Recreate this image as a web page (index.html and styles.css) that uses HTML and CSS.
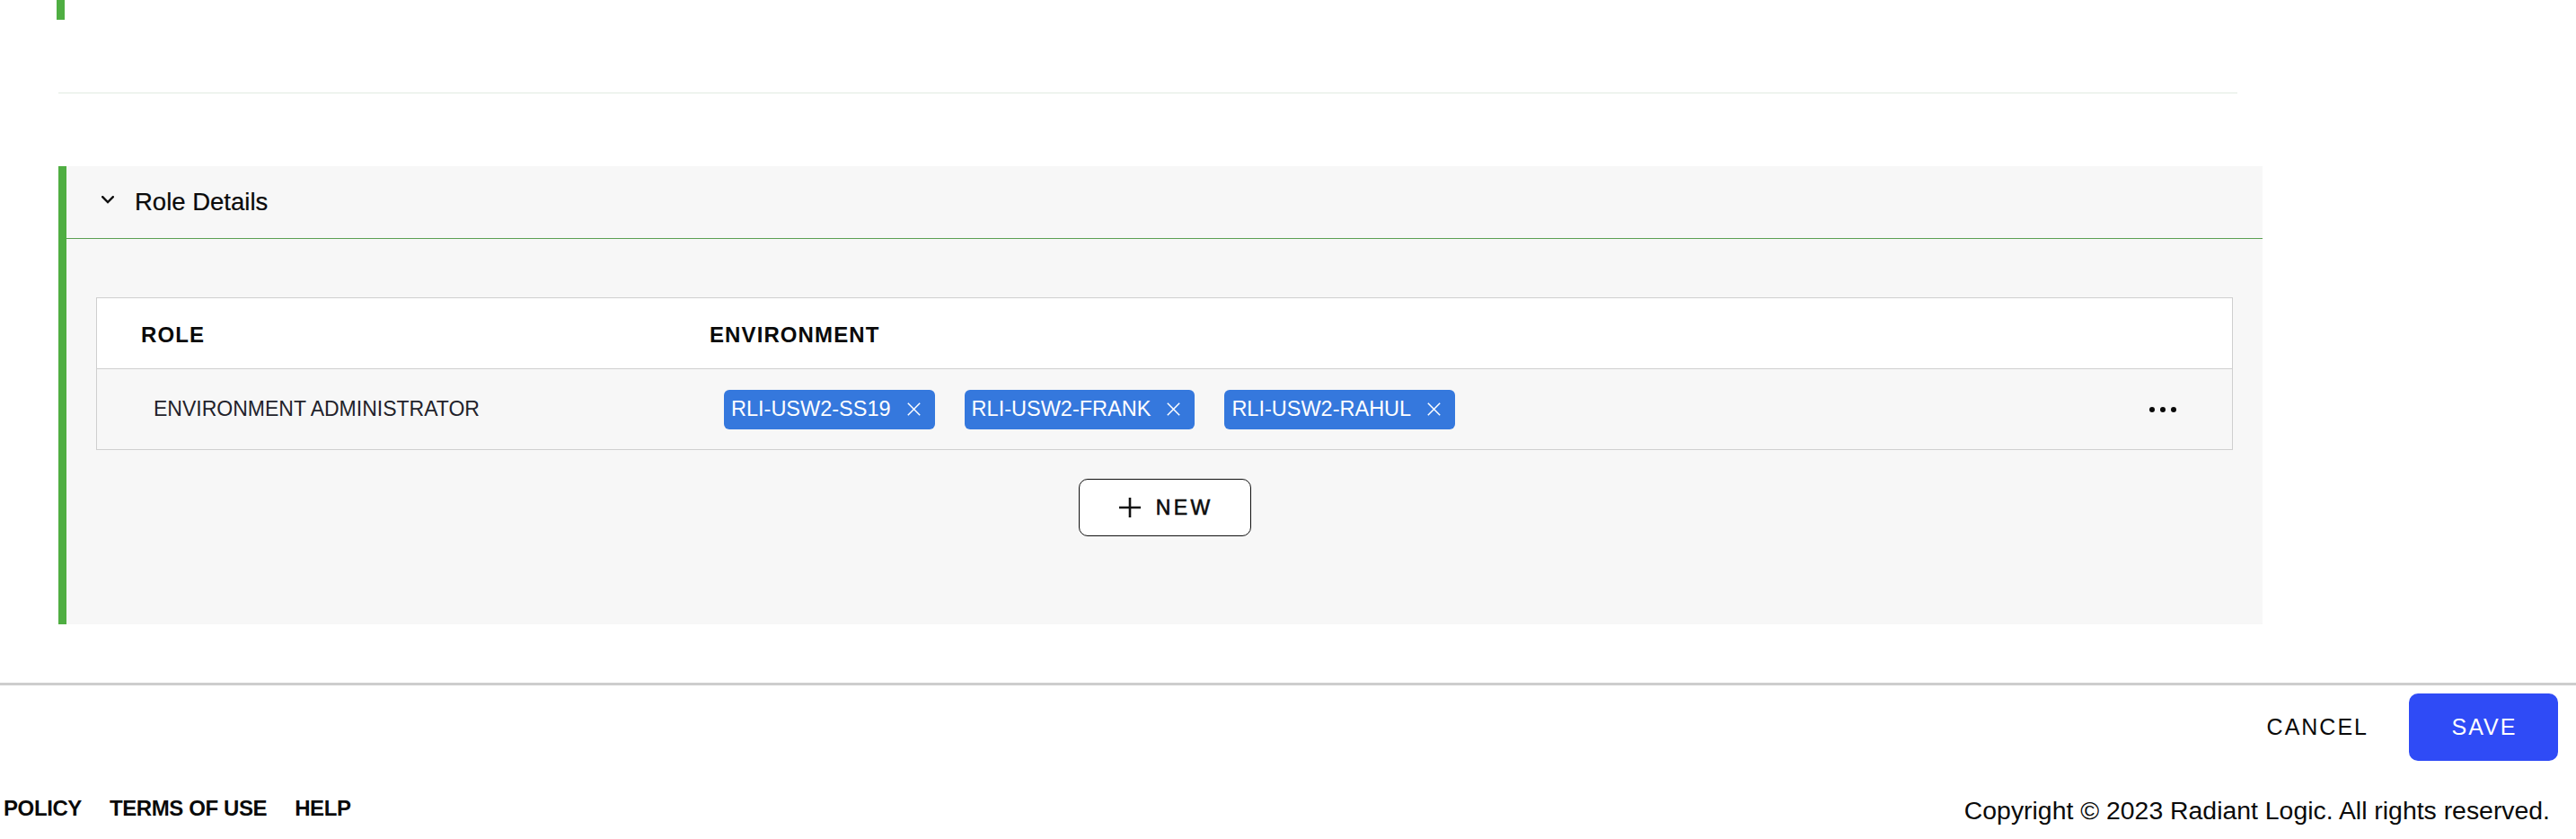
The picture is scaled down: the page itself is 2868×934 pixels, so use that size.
FILE: index.html
```html
<!DOCTYPE html>
<html lang="en">
<head>
<meta charset="utf-8">
<title>Role Details</title>
<link rel="stylesheet" href="styles.css">
</head>
<body>
<div class="page">
  <div class="prev-card"></div>
  <div class="divider"></div>

  <section class="role-section">
    <div class="section-header">
      <svg class="chevron" width="14" height="9" viewBox="0 0 14 9"><polyline points="1.2,1.2 7,7 12.8,1.2" fill="none" stroke="#111" stroke-width="2.4" stroke-linecap="square"/></svg>
      <span class="section-title">Role Details</span>
    </div>
    <div class="section-body">
      <div class="roles-table">
        <div class="row head-row">
          <div class="cell head-cell">ROLE</div>
          <div class="cell head-cell">ENVIRONMENT</div>
          <div class="cell head-cell"></div>
        </div>
        <div class="row body-row">
          <div class="cell role-cell">ENVIRONMENT ADMINISTRATOR</div>
          <div class="cell env-cell">
            <span class="chip">RLI-USW2-SS19<svg class="chip-x" width="15" height="15" viewBox="0 0 15 15"><path d="M0.8 0.8 L14.2 14.2 M14.2 0.8 L0.8 14.2" stroke="#fff" stroke-width="1.5" fill="none"/></svg></span>
            <span class="chip">RLI-USW2-FRANK<svg class="chip-x" width="15" height="15" viewBox="0 0 15 15"><path d="M0.8 0.8 L14.2 14.2 M14.2 0.8 L0.8 14.2" stroke="#fff" stroke-width="1.5" fill="none"/></svg></span>
            <span class="chip">RLI-USW2-RAHUL<svg class="chip-x" width="15" height="15" viewBox="0 0 15 15"><path d="M0.8 0.8 L14.2 14.2 M14.2 0.8 L0.8 14.2" stroke="#fff" stroke-width="1.5" fill="none"/></svg></span>
          </div>
          <div class="cell menu-cell">
            <span class="dots"><i></i><i></i><i></i></span>
          </div>
        </div>
      </div>
      <div class="new-wrap">
        <button class="new-btn" type="button">
          <svg class="plus" width="24" height="22" viewBox="0 0 24 22"><path d="M0 11 H24 M12 0 V22" stroke="#111" stroke-width="2.6" fill="none"/></svg>
          <span class="new-label">NEW</span>
        </button>
      </div>
    </div>
  </section>

  <div class="footer-rule"></div>

  <div class="actions">
    <button class="cancel-btn" type="button">CANCEL</button>
    <button class="save-btn" type="button">SAVE</button>
  </div>

  <footer class="footer">
    <nav class="footer-links">
      <a class="footer-link">POLICY</a>
      <a class="footer-link">TERMS OF USE</a>
      <a class="footer-link">HELP</a>
    </nav>
    <div class="copyright">Copyright © 2023 Radiant Logic. All rights reserved.</div>
  </footer>
</div>
</body>
</html>
```

FILE: styles.css
```css
* { box-sizing: border-box; }

html, body {
  margin: 0;
  padding: 0;
  background: #ffffff;
}

body {
  font-family: "Liberation Sans", Arial, sans-serif;
  color: #111111;
}

.page {
  width: 2868px;
  height: 934px;
  overflow: hidden;
}

.prev-card {
  margin-left: 63px;
  width: 9px;
  height: 22px;
  background: #4fae42;
}

.divider {
  margin: 81px 0 0 65px;
  width: 2426px;
  height: 1px;
  background: #e1ebe1;
}

.role-section {
  margin: 81px 0 0 65px;
  width: 2454px;
  background: #f7f7f7;
  border-left: 9px solid #4fae42;
}

.section-header {
  height: 81px;
  display: flex;
  align-items: center;
  padding-left: 39px;
  border-bottom: 1px solid #5b9f52;
}

.chevron {
  display: block;
  margin-top: -6px;
  margin-right: 23px;
}

.section-title {
  font-size: 27.5px;
  color: #0a0a0a;
  -webkit-text-stroke: 0.2px #0a0a0a;
}

.section-body {
  padding: 65px 33px 98px;
}

.roles-table {
  border: 1px solid #cfcfcf;
}

.row {
  display: grid;
  grid-template-columns: 633px 1fr auto;
  align-items: center;
}

.head-row {
  height: 79px;
  background: #ffffff;
  border-bottom: 1px solid #cfcfcf;
}

.head-cell {
  padding-left: 49px;
  padding-top: 4px;
  font-size: 24px;
  font-weight: 700;
  letter-spacing: 1.1px;
  color: #0a0a0a;
}

.body-row {
  height: 89px;
  background: #f7f7f7;
}

.role-cell {
  padding-left: 63px;
  font-size: 23px;
  color: #22222a;
}

.env-cell {
  padding-left: 65px;
  display: flex;
  gap: 33px;
}

.chip {
  display: inline-flex;
  align-items: center;
  height: 44px;
  padding: 0 16px 0 8px;
  gap: 18px;
  background: #3578dd;
  border-radius: 6px;
  color: #ffffff;
  font-size: 23.5px;
}

.chip-x {
  display: block;
}

.menu-cell {
  padding-right: 62px;
}

.dots {
  display: flex;
  gap: 6px;
}

.dots i {
  display: block;
  width: 6px;
  height: 6px;
  border-radius: 50%;
  background: #0a0a0a;
}

.new-wrap {
  display: flex;
  justify-content: center;
  margin-top: 32px;
}

.new-btn {
  width: 192px;
  height: 64px;
  display: flex;
  align-items: center;
  justify-content: center;
  gap: 17px;
  background: #ffffff;
  border: 1.5px solid #111111;
  border-radius: 10px;
  font-family: "Liberation Sans", Arial, sans-serif;
  padding: 0;
}

.plus { display: block; }

.new-label {
  font-size: 23px;
  font-weight: 400;
  -webkit-text-stroke: 0.6px #0d0d0d;
  letter-spacing: 3.5px;
  color: #0d0d0d;
  margin-right: -3.5px;
}

.footer-rule {
  margin-top: 65px;
  height: 3px;
  background: #cdcdcd;
}

.actions {
  display: flex;
  justify-content: flex-end;
  align-items: center;
  gap: 45px;
  margin-top: 9px;
  padding-right: 20px;
}

.cancel-btn {
  background: none;
  border: none;
  padding: 0;
  font-family: "Liberation Sans", Arial, sans-serif;
  font-size: 25px;
  letter-spacing: 2px;
  color: #0a0a0a;
}

.save-btn {
  width: 166px;
  height: 75px;
  background: #2f4bf6;
  border: none;
  border-radius: 10px;
  color: #ffffff;
  font-family: "Liberation Sans", Arial, sans-serif;
  font-size: 25px;
  letter-spacing: 2px;
  padding: 0 0 0 2px;
}

.footer {
  display: flex;
  justify-content: space-between;
  align-items: flex-start;
  margin-top: 39px;
  padding: 0 29px 0 4px;
}

.footer-links {
  display: flex;
  gap: 31px;
}

.footer-link {
  font-size: 24px;
  line-height: 28px;
  font-weight: 700;
  letter-spacing: -0.4px;
  color: #0a0a0a;
}

.copyright {
  font-size: 28.4px;
  line-height: 32px;
  color: #0a0a0a;
}
```
